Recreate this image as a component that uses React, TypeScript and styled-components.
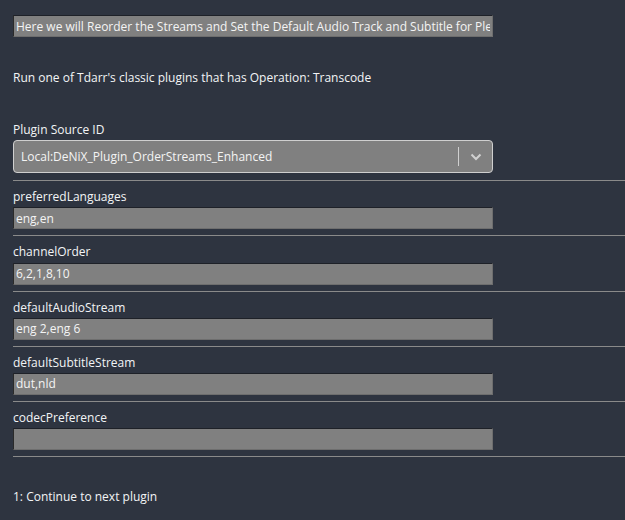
import React from "react";
import styled, { createGlobalStyle } from "styled-components";

const Global = createGlobalStyle`
  html, body { margin: 0; padding: 0; background: #2e3440; }
  body { font-family: "Open Sans", "Noto Sans", sans-serif; color: #f3f4f6; }
  * { box-sizing: border-box; }
`;

const Page = styled.div`
  width: 625px;
  height: 520px;
  overflow: hidden;
  background: #2e3440;
  padding: 15px 0 0 13px;
  font-size: 12px;
`;

const TextField = styled.input`
  display: block;
  width: 480px;
  height: 22px;
  margin: 0;
  padding: 0 2px;
  background: #808080;
  color: #f4f4f4;
  font-family: inherit;
  font-size: 12px;
  border-style: solid;
  border-width: 1px;
  border-color: #1e2128 #6e6e6e #6e6e6e #2a2a2a;
  outline: none;
`;

const Description = styled.p`
  margin: 31px 0 0 0;
  line-height: 20px;
`;

const SourceBlock = styled.div`
  margin-top: 32px;
  padding-bottom: 7px;
  border-bottom: 1px solid #8a8a8a;
`;

const Label = styled.div`
  line-height: 18px;
  height: 18.2px;
  padding-top: 1px;
  margin-bottom: 2px;
`;

const Select = styled.div`
  width: 480px;
  height: 33px;
  display: flex;
  align-items: center;
  background: #808080;
  border: 1px solid #cfcfcf;
  border-radius: 4px;
`;

const SelectValue = styled.div`
  flex: 1;
  padding-left: 7px;
  color: #f4f4f4;
  white-space: nowrap;
`;

const Separator = styled.span`
  width: 1px;
  height: 19px;
  background: #d0d0d0;
`;

const Chevron = styled.div`
  width: 33px;
  display: flex;
  justify-content: center;
  align-items: center;
`;

const Field = styled.div`
  padding-top: 6px;
  padding-bottom: 6px;
  border-bottom: 1px solid #8a8a8a;
`;

const Footer = styled.p`
  margin: 31px 0 0 0;
  line-height: 18px;
`;

const fields: [string, string][] = [
  ["preferredLanguages", "eng,en"],
  ["channelOrder", "6,2,1,8,10"],
  ["defaultAudioStream", "eng 2,eng 6"],
  ["defaultSubtitleStream", "dut,nld"],
  ["codecPreference", ""],
];

export default function App() {
  return (
    <>
      <Global />
      <Page>
        <TextField
          readOnly
          value="Here we will Reorder the Streams and Set the Default Audio Track and Subtitle for Plex"
        />
        <Description>Run one of Tdarr's classic plugins that has Operation: Transcode</Description>
        <SourceBlock>
          <Label>Plugin Source ID</Label>
          <Select>
            <SelectValue>Local:DeNiX_Plugin_OrderStreams_Enhanced</SelectValue>
            <Separator />
            <Chevron>
              <svg width="12" height="8" viewBox="0 0 12 8">
                <path d="M1.5 1.5 L6 6 L10.5 1.5" stroke="#d0d0d0" strokeWidth="2" fill="none" />
              </svg>
            </Chevron>
          </Select>
        </SourceBlock>
        {fields.map(([label, value]) => (
          <Field key={label}>
            <Label>{label}</Label>
            <TextField readOnly value={value} />
          </Field>
        ))}
        <Footer>1: Continue to next plugin</Footer>
      </Page>
    </>
  );
}
